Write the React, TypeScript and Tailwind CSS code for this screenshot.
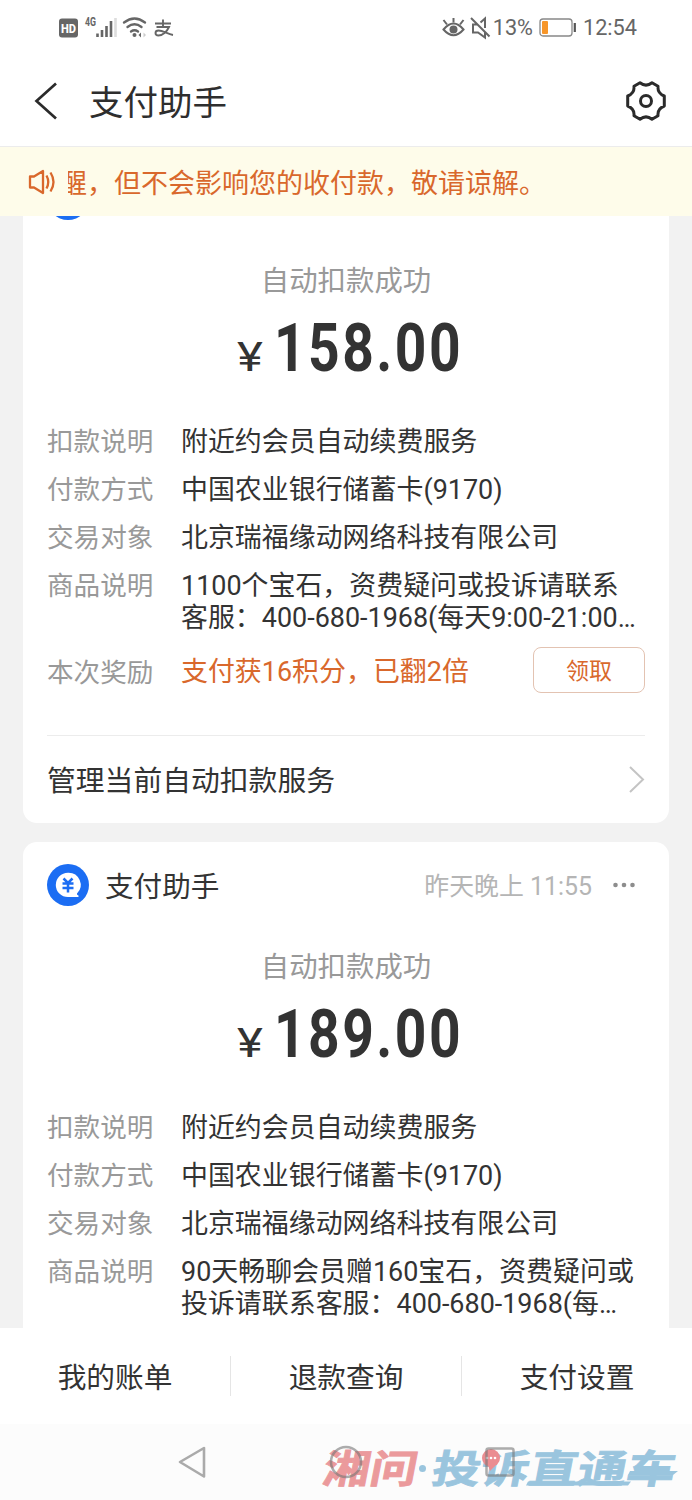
import React from "react";

function StatusBar() {
  return (
    <div className="flex h-[55px] shrink-0 items-center pl-[58px] pr-[55px] text-[21.7px] text-[#666]">
      <svg width="116" height="28" viewBox="0 0 116 28" fill="none">
        <rect x="1" y="4.500" width="19" height="19" rx="3" fill="#666" />
        <text x="3" y="18.500" fontSize="12.500" fontWeight="800" fill="#fff" textLength="15" lengthAdjust="spacingAndGlyphs">HD</text>
        <text x="27" y="12" fontSize="12" fontWeight="700" fill="#666" textLength="11" lengthAdjust="spacingAndGlyphs">4G</text>
        <path d="M39.500 19.500v3.500M44 16v7M48.500 12v11M53 7v16" stroke="#666" strokeWidth="2.600" />
        <path d="M57.500 4v19" stroke="#ddd" strokeWidth="2.600" />
        <path d="M66 8.500q10.500-8 21 0M69.500 13q7-5.500 14 0M73 17.500q3.500-2.500 7 0" stroke="#666" strokeWidth="2.300" strokeLinecap="round" />
        <circle cx="76.500" cy="21" r="2" fill="#666" />
        <path d="m83 18.500-2.500 2.500 2.500 2.500z" fill="#666" />
        <path d="m85.500 18.500 2.500 2.500-2.500 2.500z" fill="#ccc" />
        <path d="M97 9.500h16M105 5.500v7.500M98.500 13h12.500c-2 4.500-6.500 8.500-10.500 8.500-4 0-4-5 0-5 4.500 0 9 3.500 14.500 4.500" stroke="#666" strokeWidth="1.900" />
      </svg>
      <svg className="ml-auto" width="50" height="28" viewBox="0 0 50 28" fill="none" stroke="#666" strokeWidth="2">
        <path d="M1.500 15.500Q11.500 3.500 21.500 15.500Q11.500 27 1.500 15.500Z" />
        <circle cx="11.500" cy="15.500" r="4" fill="#666" stroke="none" />
        <path d="M11.500 8.500V4M5 10.500 1.500 6M18 10.500 21.500 6" />
        <path d="m29 4 18.500 18.500M35.500 10.500H31v8h5l7 5v-5M38.500 8.500l4.500-4v9.500" />
      </svg>
      <span className="ml-[1px] leading-7">13%</span>
      <svg className="ml-[6px]" width="38" height="28" viewBox="0 0 38 28" fill="none">
        <rect x="1" y="5" width="32" height="17" rx="3" stroke="#888" strokeWidth="1.300" />
        <rect x="3" y="7" width="6" height="13" rx="1" fill="#f7962a" />
        <path d="M35.800 9v9" stroke="#555" strokeWidth="2.200" />
      </svg>
      <span className="ml-[6px] leading-7">12:54</span>
    </div>
  );
}

function Header() {
  return (
    <header className="flex h-[92px] shrink-0 items-center border-b border-[#ececec] pl-[34px] pr-[26px]">
      <svg width="24" height="38" viewBox="0 0 24 38" fill="none" stroke="#2b2b2b" strokeWidth="2.700">
        <path d="M22 1.500 2.500 19l19.500 17.500" />
      </svg>
      <h1 className="ml-[31px] pt-[4px] text-[34.5px] leading-[50px] text-[#2e2e2e]">支付助手</h1>
      <svg className="ml-auto" width="40" height="40" viewBox="0 0 40 40" fill="none" stroke="#2b2b2b" strokeWidth="3" strokeLinejoin="round">
        <path d="M14 1.800Q20 6.500 26 1.800L32 5.300Q31.300 12.300 38.300 15V25Q31.300 27.700 32 34.700L26 38.200Q20 33.500 14 38.200L8 34.700Q8.700 27.700 1.700 25V15Q8.700 12.300 8 5.300Z" />
        <circle cx="20" cy="20" r="5.500" />
      </svg>
    </header>
  );
}

function Notice() {
  return (
    <div className="flex h-[69px] shrink-0 items-center bg-[#fefcea] pl-[28px] text-[#d9682c]">
      <svg width="28" height="26" viewBox="0 0 28 26" fill="none" stroke="currentColor" strokeWidth="2.300" strokeLinejoin="round">
        <path d="M2 7.500h4L15 2v22l-9-5.500H2ZM18.500 6.500q3.500 6.500 0 13M22.500 3.500q6 9.500 0 19" />
      </svg>
      <div className="ml-[12px] flex overflow-hidden pt-[4px]">
        <span className="-ml-[8px] whitespace-nowrap text-[27px] leading-10">醒，但不会影响您的收付款，敬请谅解。</span>
      </div>
    </div>
  );
}

function CardHeader({ time }: { time?: string }) {
  return (
    <div className="flex h-[86px] items-center pr-[7px]">
      <svg width="42" height="42" viewBox="0 0 42 42">
        <circle cx="21" cy="21" r="21" fill="#1b6df3" />
        <path d="M21 8.700a12.200 12.200 0 1 0 0 24.400h10.500v-1.500q-2-.3-1.500-2A12.200 12.200 0 0 0 21 8.700Z" fill="#fff" />
        <path d="m16.500 14.500 4.500 4.500 4.500-4.500M15.500 19.500h11M15.500 24h11M21 19v9.500" stroke="#1b6df3" strokeWidth="2.500" fill="none" />
      </svg>
      {time && (
        <>
          <span className="ml-[16px] pt-[4px] text-[28.6px] text-[#333]">支付助手</span>
          <span className="ml-auto pt-[4px] text-[24.9px] text-[#b5b5b5]">{time}</span>
          <svg className="ml-[20px]" width="26" height="8" viewBox="0 0 26 8" fill="#8d8d8d">
            <circle cx="3.500" cy="4" r="2.300" />
            <circle cx="12" cy="4" r="2.300" />
            <circle cx="20.500" cy="4" r="2.300" />
          </svg>
        </>
      )}
    </div>
  );
}

function Row({ label, children }: { label: string; children: React.ReactNode }) {
  return (
    <div className="flex pt-[9px] pb-[7px] text-[26.6px] leading-8">
      <span className="w-[134px] shrink-0 text-[#999]">{label}</span>
      <div className="whitespace-nowrap text-[26.95px] text-[#333]">{children}</div>
    </div>
  );
}

type CardProps = { amount: string; time?: string; lines: string[]; children?: React.ReactNode };

function Card({ amount, time, lines, children }: CardProps) {
  return (
    <section className="mx-[23px] h-[667px] shrink-0 rounded-[14px] bg-white px-[24px]">
      <CardHeader time={time} />
      <div className="flex h-[76px] items-center justify-center pt-[4px] text-[28.4px] text-[#999]">自动扣款成功</div>
      <div className="flex h-[99px] items-start pl-[190px] text-[#333]">
        <span className="mt-[9px] w-[37px] origin-left scale-x-[1.2] text-[41px] leading-[60px]">¥</span>
        <span className="origin-left scale-x-[0.823] text-[67px] font-bold leading-[60px] tracking-[3px]">{amount}</span>
      </div>
      <Row label="扣款说明">附近约会员自动续费服务</Row>
      <Row label="付款方式">中国农业银行储蓄卡(9170)</Row>
      <Row label="交易对象">北京瑞福缘动网络科技有限公司</Row>
      <Row label="商品说明">
        {lines.map((line) => (
          <p key={line}>{line}</p>
        ))}
      </Row>
      {children}
    </section>
  );
}

function Reward() {
  return (
    <>
      <div className="mt-[6px] flex h-[46px] items-center text-[26.6px]">
        <span className="w-[134px] pt-[5px] text-[#999]">本次奖励</span>
        <span className="pt-[5px] text-[26.95px] text-[#d9682c]">支付获16积分，已翻2倍</span>
        <button className="ml-auto h-[46px] w-[112px] rounded-[8px] border border-[#e3c3b2] pt-[4px] text-[23px] text-[#d9682c]">领取</button>
      </div>
      <div className="mt-[42px] flex h-[88px] items-center border-t border-[#ececec] text-[28.8px] text-[#333]">
        <span className="pt-[5px]">管理当前自动扣款服务</span>
        <svg className="ml-auto" width="17" height="28" viewBox="0 0 17 28" fill="none" stroke="#c4c4c4" strokeWidth="2">
          <path d="m2 1 13 12.500L2 26" />
        </svg>
      </div>
    </>
  );
}

function Tabs() {
  return (
    <nav className="flex h-[96px] shrink-0 items-center bg-white text-center text-[28.7px] leading-[36px] text-[#333]">
      <span className="w-[230px] pt-[4px]">我的账单</span>
      <span className="w-[232px] border-x border-[#e5e5e5] pt-[4px]">退款查询</span>
      <span className="w-[230px] pt-[4px]">支付设置</span>
    </nav>
  );
}

function SystemNav() {
  return (
    <footer className="h-[76px] shrink-0 bg-[#fcfcfc]">
      <svg width="692" height="76" viewBox="0 0 692 76" fill="none">
        <g fontWeight="700" fontFamily="Noto Sans CJK SC">
          <text transform="translate(321 58.500) skewX(-11)" fontSize="39" fill="#eb9a9c" stroke="#eb9a9c" strokeWidth=".8" textLength="94" lengthAdjust="spacingAndGlyphs">湘问</text>
          <text transform="translate(430 58.500) skewX(-11)" fontSize="39" fill="#9ac5de" stroke="#9ac5de" strokeWidth=".8" textLength="243" lengthAdjust="spacingAndGlyphs">投诉直通车</text>
        </g>
        <circle cx="422.500" cy="44.500" r="3.500" fill="#9ac5de" />
        <path d="M528 57.500h103l-3 4H526ZM630 47h48l-5 4h-45Z" fill="#9ac5de" />
        <path d="M204 24v28.500L180 38Z" stroke="#aaa" strokeWidth="2.600" strokeLinejoin="round" />
        <circle cx="346" cy="38" r="15" stroke="#777" strokeOpacity=".6" strokeWidth="2.500" />
        <circle cx="491" cy="34" r="9" fill="#eb8d91" />
        <path d="m488 41 2 6 5-5z" fill="#eb8d91" />
        <g fill="#fff">
          <circle cx="487" cy="34" r="1.300" />
          <circle cx="491" cy="34" r="1.300" />
          <circle cx="495" cy="34" r="1.300" />
        </g>
        <rect x="486.500" y="24.500" width="27" height="27" rx="2" stroke="#777" strokeOpacity=".6" strokeWidth="2.500" />
      </svg>
    </footer>
  );
}

export default function App() {
  return (
    <div lang="zh-CN" className="flex h-[1500px] w-[692px] flex-col overflow-hidden bg-white font-['Roboto','Noto_Sans_CJK_SC',sans-serif]">
      <StatusBar />
      <Header />
      <Notice />
      <main className="h-[1112px] shrink-0 overflow-hidden bg-[#f2f2f2]">
        <div className="-mt-[60px] flex flex-col gap-[19px]">
          <Card amount="158.00" lines={["1100个宝石，资费疑问或投诉请联系", "客服：400-680-1968(每天9:00-21:00…"]}>
            <Reward />
          </Card>
          <Card amount="189.00" time="昨天晚上 11:55" lines={["90天畅聊会员赠160宝石，资费疑问或", "投诉请联系客服：400-680-1968(每…"]} />
        </div>
      </main>
      <Tabs />
      <SystemNav />
    </div>
  );
}
